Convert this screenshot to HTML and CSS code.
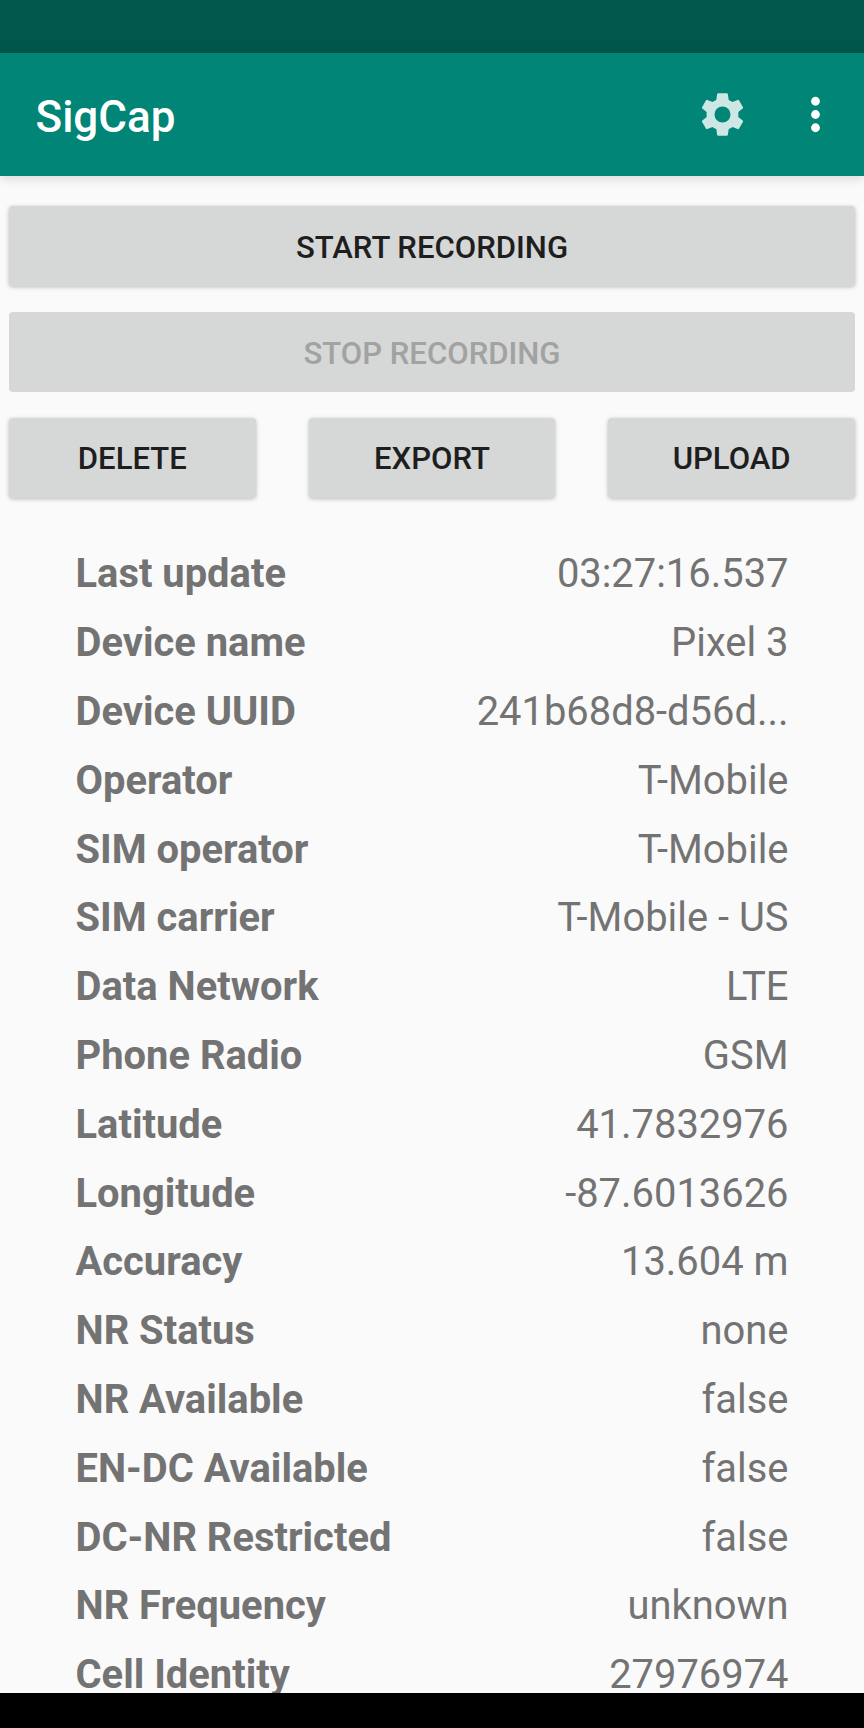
FILE: index.html
```html
<!DOCTYPE html>
<html lang="en">
<head>
<meta charset="utf-8">
<title>SigCap</title>
<link rel="stylesheet" href="styles.css">
</head>
<body>
<div class="screen">
<div class="status"></div>
<header class="bar">
<h1 class="title">SigCap</h1>
<svg class="gear" viewBox="-26.5 -26.5 53 53"><path fill-rule="evenodd" d="M-4.2-21.3H4.2Q5.2-21.3 5.4-20.2L6.2-14.6Q8.2-13.8 10-12.4L15.1-14.6Q16.1-14.9 16.6-14L20.5-7.2Q20.8-6.4 20.2-5.9L15.8-2.4Q16.1 0 15.8 2.4L20.2 5.9Q20.8 6.4 20.5 7.2L16.6 14Q16.1 14.9 15.1 14.6L10 12.4Q8.2 13.8 6.2 14.6L5.4 20.2Q5.2 21.3 4.2 21.3H-4.2Q-5.2 21.3-5.4 20.2L-6.2 14.6Q-8.2 13.8-10 12.4L-15.1 14.6Q-16.1 14.9-16.6 14L-20.5 7.2Q-20.8 6.4-20.2 5.9L-15.8 2.4Q-16.1 0-15.8-2.4L-20.2-5.9Q-20.8-6.4-20.5-7.2L-16.6-14Q-16.1-14.9-15.1-14.6L-10-12.4Q-8.2-13.8-6.2-14.6L-5.4-20.2Q-5.2-21.3-4.2-21.3ZM0-8A8 8 0 1 0 0 8A8 8 0 1 0 0-8Z"/></svg>
<svg class="more" viewBox="0 0 24 24"><circle cx="12" cy="6" r="2"/><circle cx="12" cy="12" r="2"/><circle cx="12" cy="18" r="2"/></svg>
</header>
<main class="content">
<div class="actions">
<button class="btn">START RECORDING</button>
<button class="btn off" disabled>STOP RECORDING</button>
<div class="trio"><button class="btn">DELETE</button><button class="btn">EXPORT</button><button class="btn">UPLOAD</button></div>
</div>
<dl class="list">
<div class="row"><dt>Last update</dt><dd>03:27:16.537</dd></div>
<div class="row"><dt>Device name</dt><dd>Pixel 3</dd></div>
<div class="row"><dt>Device UUID</dt><dd>241b68d8-d56d...</dd></div>
<div class="row"><dt>Operator</dt><dd>T-Mobile</dd></div>
<div class="row"><dt>SIM operator</dt><dd>T-Mobile</dd></div>
<div class="row"><dt>SIM carrier</dt><dd>T-Mobile - US</dd></div>
<div class="row"><dt>Data Network</dt><dd>LTE</dd></div>
<div class="row"><dt>Phone Radio</dt><dd>GSM</dd></div>
<div class="row"><dt>Latitude</dt><dd>41.7832976</dd></div>
<div class="row"><dt>Longitude</dt><dd>-87.6013626</dd></div>
<div class="row"><dt>Accuracy</dt><dd>13.604 m</dd></div>
<div class="row"><dt>NR Status</dt><dd>none</dd></div>
<div class="row"><dt>NR Available</dt><dd>false</dd></div>
<div class="row"><dt>EN-DC Available</dt><dd>false</dd></div>
<div class="row"><dt>DC-NR Restricted</dt><dd>false</dd></div>
<div class="row"><dt>NR Frequency</dt><dd>unknown</dd></div>
<div class="row"><dt>Cell Identity</dt><dd>27976974</dd></div>
</dl>
</main>
<div class="nav"></div>
</div>
</body>
</html>
```
FILE: styles.css
```css
body { margin: 0; }
.screen { display: flex; flex-direction: column; width: 864px; height: 1728px; overflow: hidden; background: #fafafa; font-family: Roboto, sans-serif; }
.status { height: 53px; flex: none; background: #00574b; }
.bar { height: 123px; flex: none; box-sizing: border-box; display: flex; align-items: center; padding: 0 22.5px 0 35.5px; background: #008577; box-shadow: 0 3px 10px rgba(0,0,0,.13); z-index: 1; }
.title { margin: 4px auto 0 0; font-size: 44px; line-height: 52px; font-weight: 500; color: #fff; }
.gear { width: 53px; height: 53px; margin-right: 39.5px; fill: #cce7e4; }
.more { width: 53px; height: 53px; fill: #fff; }
.content { flex: 1; min-height: 0; overflow: hidden; }
.actions { display: flex; flex-direction: column; gap: 26px; padding: 30px 9px 0; }
.btn { display: block; height: 80px; padding: 2px 0 0; border: 0; border-radius: 4px; background: #d6d7d7; color: #1e1e1e; font: 500 31.1px Roboto, sans-serif; box-shadow: 0 1px 4px rgba(0,0,0,.26); }
.off { color: #a1a2a2; box-shadow: none; }
.trio { display: grid; grid-template-columns: repeat(3, 1fr); gap: 53px; }
.trio .btn { padding-top: 1px; }
.list { margin: 42.4px 75.5px 0; font-size: 39.9px; color: #737373; }
.row { display: flex; justify-content: space-between; height: 68.8px; line-height: 68.8px; white-space: nowrap; }
dt { font-weight: 700; }
dd { margin: 0; }
.nav { height: 35px; flex: none; background: #000; }
```
